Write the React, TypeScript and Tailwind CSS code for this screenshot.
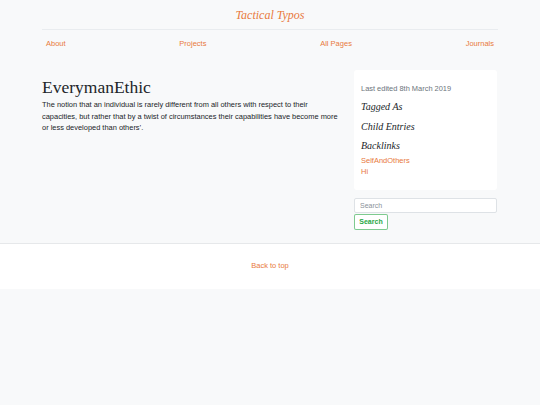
import React from "react";

const serif = { fontFamily: '"Liberation Serif", "DejaVu Serif", serif' };

const navLinks = ["About", "Projects", "All Pages", "Journals"];

export default function App() {
  return (
    <div
      className="min-h-[405px] bg-[#f8f9fa] text-[#212529]"
      style={{ fontFamily: '"Liberation Sans", Arial, sans-serif' }}
    >
      {/* Header */}
      <header className="mx-[42px] pt-[6px]">
        <div className="border-b border-[#e9ecef] pb-[6px] text-center leading-[16px]">
          <a
            className="text-[12px] italic leading-[16px] text-[#e8793d]"
            style={serif}
          >
            Tactical Typos
          </a>
        </div>
        <nav className="flex justify-between px-[4px] pt-[9px]">
          {navLinks.map((link) => (
            <a key={link} className="block text-[7.5px] leading-[10px] text-[#e8793d]">
              {link}
            </a>
          ))}
        </nav>
      </header>

      {/* Body */}
      <main className="mx-[42px] mt-[21px] flex items-start gap-[14px]">
        <div className="w-[298px] pt-[7px]">
          <h1 className="text-[17.5px] leading-[21px] text-[#212529]" style={serif}>
            EverymanEthic
          </h1>
          <p className="mt-[1px] text-[7.45px] leading-[11.5px] text-[#212529]">
            The notion that an individual is rarely different from all others with respect to their
            capacities, but rather that by a twist of circumstances their capabilities have become
            more or less developed than others’.
          </p>
        </div>

        <aside className="w-[143px]">
          <div className="rounded-[3px] bg-white px-[7px] pb-[13px] pt-[14px]">
            <p className="text-[7.45px] leading-[10px] text-[#6c757d]">Last edited 8th March 2019</p>
            <h4 className="mt-[7px] text-[10px] italic leading-[12px]" style={serif}>
              Tagged As
            </h4>
            <h4 className="mt-[7.5px] text-[10px] italic leading-[12px]" style={serif}>
              Child Entries
            </h4>
            <h4 className="mt-[7.5px] text-[10px] italic leading-[12px]" style={serif}>
              Backlinks
            </h4>
            <ul className="mt-[2.5px] text-[7.5px] leading-[11px] text-[#e8793d]">
              <li>SelfAndOthers</li>
              <li>Hi</li>
            </ul>
          </div>

          <form className="mt-[8px] leading-none">
            <input
              placeholder="Search"
              className="block h-[15px] w-full rounded-[2px] border border-[#dee2e6] bg-white px-[5px] text-[7px] text-[#495057] placeholder:text-[#8a9199] outline-none"
            />
            <button
              type="button"
              className="mt-[1px] block h-[16px] w-[34px] rounded-[2px] border border-[#28a745]/60 bg-white text-[7px] font-bold text-[#28a745]"
            >
              Search
            </button>
          </form>
        </aside>
      </main>

      {/* Footer */}
      <footer className="mt-[13px] flex h-[46px] items-center justify-center border-t border-[#e6e8ea] bg-white">
        <a className="text-[7.5px] text-[#e8793d]">Back to top</a>
      </footer>
    </div>
  );
}
